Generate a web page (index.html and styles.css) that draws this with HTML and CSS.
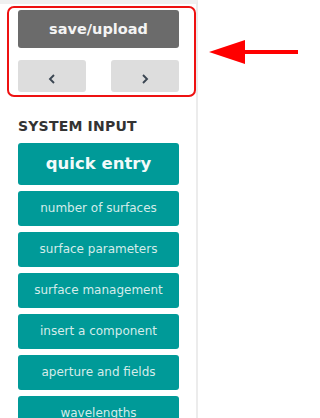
FILE: index.html
```html
<!DOCTYPE html>
<html>
<head>
    <meta charset="utf-8" />
    <title>system input</title>
    <link rel="stylesheet" href="styles.css">
</head>
<body>
    <div class="sidebar">
        <a class="btn-save" href="#">save/upload</a>
        <div class="nav-row">
            <a class="btn-nav" href="#">
                <svg class="chev" width="8" height="10" viewBox="0 0 8 10"><polyline points="6,1 2,5 6,9" fill="none" stroke="#3b4652" stroke-width="1.9"/></svg>
            </a>
            <a class="btn-nav" href="#">
                <svg class="chev" width="8" height="10" viewBox="0 0 8 10"><polyline points="2,1 6,5 2,9" fill="none" stroke="#3b4652" stroke-width="1.9"/></svg>
            </a>
        </div>

        <div class="section-title">SYSTEM INPUT</div>
        <a class="btn-quick" href="#">quick entry</a>
        <a class="btn-item" href="#">number of surfaces</a>
        <a class="btn-item" href="#">surface parameters</a>
        <a class="btn-item" href="#">surface management</a>
        <a class="btn-item" href="#">insert a component</a>
        <a class="btn-item" href="#">aperture and fields</a>
        <a class="btn-item" href="#">wavelengths</a>
    </div>

    <!-- annotation over the page -->
    <div class="mark-box"></div>
    <svg class="mark-arrow" width="100" height="40" viewBox="0 0 100 40">
        <rect x="38" y="14" width="55" height="4" fill="#ff0000"/>
        <polygon points="4,16 40,4 40,28" fill="#ff0000"/>
    </svg>
</body>
</html>
```

FILE: styles.css
```css
body {
    margin: 0;
    padding: 0;
    background: #fff;
    font-family: "DejaVu Sans", "Liberation Sans", sans-serif;
    overflow: hidden;
}

a {
    text-decoration: none;
}

.sidebar {
    width: 161px;
    height: 418px;
    padding: 6px 17px 0 18px;
    border-top: 4px solid #f0f0f0;
    border-right: 2px solid #ececec;
    box-sizing: content-box;
}

.btn-save {
    display: block;
    height: 38px;
    line-height: 38px;
    text-align: center;
    background: #6b6b6b;
    color: #f4f4f4;
    font-weight: bold;
    font-size: 14.5px;
    border-radius: 3px;
}

.nav-row {
    display: flex;
    justify-content: space-between;
    margin-top: 12px;
}

.btn-nav {
    width: 68px;
    height: 32px;
    display: flex;
    align-items: center;
    justify-content: center;
    background: #dddddd;
    border-radius: 3px;
}

.chev {
    margin-top: 6px;
}

.section-title {
    margin-top: 26px;
    font-size: 14px;
    line-height: 17px;
    font-weight: bold;
    color: #333;
    letter-spacing: 0.2px;
}

.btn-quick {
    display: block;
    margin-top: 8px;
    height: 42px;
    line-height: 42px;
    text-align: center;
    background: #009a98;
    color: #f2fafa;
    font-weight: bold;
    font-size: 16.5px;
    border-radius: 3px;
}

.btn-item {
    display: block;
    margin-top: 6px;
    height: 35px;
    line-height: 35px;
    text-align: center;
    background: #009a98;
    color: #d4ecea;
    font-size: 12px;
    border-radius: 3px;
}

.mark-box {
    position: absolute;
    left: 7px;
    top: 6px;
    width: 185px;
    height: 87px;
    border: 2px solid #ee1111;
    border-radius: 7px;
}

.mark-arrow {
    position: absolute;
    left: 205px;
    top: 36px;
}
```
